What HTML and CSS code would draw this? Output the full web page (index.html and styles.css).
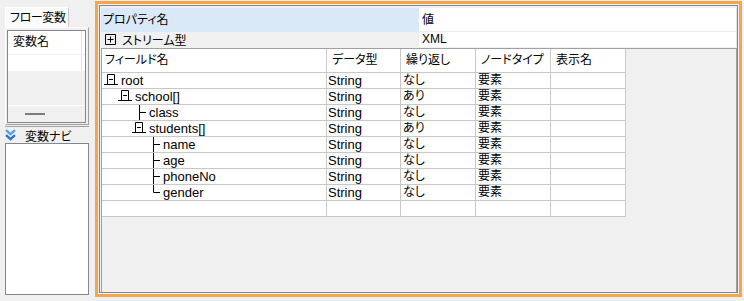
FILE: index.html
```html
<!DOCTYPE html>
<html lang="ja">
<head>
  <meta charset="UTF-8">
  <title>フロー変数</title>
  <link rel="stylesheet" href="styles.css">
</head>
<body>
  <div class="app">
    <aside class="side">
      <div class="tab">フロー変数</div>
      <div class="tab-page">
        <div class="var-list">
          <div class="var-head"><span class="var-col">変数名</span></div>
          <div class="var-row"><span class="var-col"></span></div>
          <div class="var-fill"></div>
          <div class="var-foot"><span class="grip"></span></div>
        </div>
      </div>
      <div class="nav-head">
        <svg class="chevrons" width="11" height="12" viewBox="0 0 11 12">
          <path d="M1 1.2l4.5 4 4.5-4" fill="none" stroke="#5a9ff0" stroke-width="2.4"/>
          <path d="M1 6.2l4.5 4 4.5-4" fill="none" stroke="#2a74d6" stroke-width="2.4"/>
        </svg>
        <span>変数ナビ</span>
      </div>
      <div class="nav-body"></div>
    </aside>

    <main class="main">
      <div class="frame">
        <div class="props">
          <div class="prop-head name">プロパティ名</div>
          <div class="prop-head value">値</div>
          <div class="prop-name">
            <svg width="11" height="11" viewBox="0 0 11 11"><path d="M0.5 0.5h10v10h-10zM2.5 5.5h6M5.5 2.5v6" fill="none" stroke="#000"/></svg>
            <span>ストリーム型</span>
          </div>
          <div class="prop-value">XML</div>
        </div>

        <div class="grid-area">
          <table class="fields">
            <colgroup>
              <col class="c-name"><col class="c-type"><col class="c-col"><col class="c-col"><col class="c-col">
            </colgroup>
            <tr class="head">
              <td class="first">フィールド名</td><td>データ型</td><td>繰り返し</td><td>ノードタイプ</td><td>表示名</td>
            </tr>
            <tr>
              <td><div class="node d0"><svg class="tw" width="17" height="15" viewBox="0 0 17 15"><path d="M3.5 11.5V1.5H10.5V11.5M0 11.5H14M5 6.5H9" fill="none" stroke="#000"/></svg>root</div></td>
              <td class="lt">String</td><td>なし</td><td>要素</td><td></td>
            </tr>
            <tr>
              <td><div class="node d1"><svg class="tw" width="17" height="15" viewBox="0 0 17 15"><path d="M3.5 11.5V1.5H10.5V11.5M0 11.5H14M5 6.5H9" fill="none" stroke="#000"/></svg>school[]</div></td>
              <td class="lt">String</td><td>あり</td><td>要素</td><td></td>
            </tr>
            <tr>
              <td><div class="node d2"><svg class="tw" width="17" height="15" viewBox="0 0 17 15"><path d="M7.5 0V16M7.5 7.5H14" fill="none" stroke="#000"/></svg>class</div></td>
              <td class="lt">String</td><td>なし</td><td>要素</td><td></td>
            </tr>
            <tr>
              <td><div class="node d2"><svg class="tw" width="17" height="15" viewBox="0 0 17 15"><path d="M3.5 11.5V1.5H10.5V11.5M0 11.5H14M5 6.5H9" fill="none" stroke="#000"/></svg>students[]</div></td>
              <td class="lt">String</td><td>あり</td><td>要素</td><td></td>
            </tr>
            <tr>
              <td><div class="node d3"><svg class="tw" width="17" height="15" viewBox="0 0 17 15"><path d="M7.5 0V16M7.5 7.5H14" fill="none" stroke="#000"/></svg>name</div></td>
              <td class="lt">String</td><td>なし</td><td>要素</td><td></td>
            </tr>
            <tr>
              <td><div class="node d3"><svg class="tw" width="17" height="15" viewBox="0 0 17 15"><path d="M7.5 0V16M7.5 7.5H14" fill="none" stroke="#000"/></svg>age</div></td>
              <td class="lt">String</td><td>なし</td><td>要素</td><td></td>
            </tr>
            <tr>
              <td><div class="node d3"><svg class="tw" width="17" height="15" viewBox="0 0 17 15"><path d="M7.5 0V16M7.5 7.5H14" fill="none" stroke="#000"/></svg>phoneNo</div></td>
              <td class="lt">String</td><td>なし</td><td>要素</td><td></td>
            </tr>
            <tr>
              <td><div class="node d3"><svg class="tw" width="17" height="15" viewBox="0 0 17 15"><path d="M7.5 0V7.5H14" fill="none" stroke="#000"/></svg>gender</div></td>
              <td class="lt">String</td><td>なし</td><td>要素</td><td></td>
            </tr>
            <tr>
              <td></td><td></td><td></td><td></td><td></td>
            </tr>
          </table>
        </div>
      </div>
    </main>
  </div>
</body>
</html>
```

FILE: styles.css
```css
* {
  box-sizing: border-box;
}

html, body {
  margin: 0;
}

body {
  width: 744px;
  height: 301px;
  overflow: hidden;
  background: #f0f0f0;
  font-family: "Liberation Sans", "Noto Sans CJK JP", sans-serif;
  font-size: 12px;
  font-feature-settings: "palt";
  color: #000;
}

.app {
  display: flex;
  height: 301px;
}

/* left column */
.side {
  width: 94px;
  flex: none;
  display: flex;
  flex-direction: column;
  padding: 7px 0 6px 5px;
}

.tab {
  width: 64px;
  height: 20px;
  background: #fbfbfb;
  border-top: 1px solid #fff;
  border-left: 1px solid #fff;
  border-right: 1px solid #c9c9c9;
  padding: 1px 0 0 4px;
  line-height: 18px;
  white-space: nowrap;
  letter-spacing: -0.4px;
  overflow: hidden;
}

.tab-page {
  width: 84px;
  height: 98px;
  border: 1px solid;
  border-color: #fff #a0a0a0 #a0a0a0 #fff;
  padding: 2px 2px 1px 1px;
}

.var-list {
  height: 100%;
  border: 1px solid #828790;
  display: flex;
  flex-direction: column;
  background: #f0f0f0;
}

.var-head {
  display: flex;
  height: 24px;
  background: #fff;
  border-bottom: 1px solid #f0f0f0;
}

.var-row {
  display: flex;
  height: 16px;
  background: #fff;
}

.var-col {
  width: 74px;
  border-right: 1px solid #e3e3e3;
  padding-left: 5px;
  line-height: 23px;
}

.var-fill {
  flex: 1;
}

.var-foot {
  height: 17px;
  border-top: 1px solid #fff;
  padding: 7px 0 0 17px;
}

.grip {
  display: block;
  width: 20px;
  height: 2px;
  background: #7c7c7c;
}

.nav-head {
  width: 84px;
  height: 17px;
  margin-top: 1px;
  border-top: 1px solid #a0a0a0;
  display: flex;
  align-items: center;
  gap: 9px;
}

.nav-body {
  flex: 1;
  width: 84px;
  background: #fff;
  border: 1px solid #828790;
}

/* right column */
.main {
  flex: 1;
  margin: 1px 2px 4px 1px;
  border: 3px solid #f7a54b;
  padding: 1px;
  display: flex;
  background: #f0f0f0;
}

.frame {
  flex: 1;
  min-width: 0;
  border: 1px solid #828790;
  padding: 2px 0 0 1px;
  display: flex;
  flex-direction: column;
}

.props {
  display: grid;
  grid-template-columns: 1fr 1fr;
}

.prop-head {
  height: 24px;
  line-height: 24px;
}

.prop-head.name {
  background: #d9e9f8;
  padding-left: 2px;
}

.prop-head.value {
  background: #fff;
  padding-left: 3px;
  border-right: 1px solid #e3e3e3;
  border-bottom: 1px solid #ececec;
}

.prop-name {
  height: 15px;
  display: flex;
  align-items: center;
  gap: 6px;
  padding-left: 4px;
}

.prop-value {
  height: 15px;
  line-height: 15px;
  background: #fff;
  padding-left: 3px;
  border-right: 1px solid #e3e3e3;
}

.grid-area {
  flex: 1;
  margin-top: 1px;
  border: 1px solid #a0a0a0;
  border-bottom: none;
  background: #f0f0f0;
}

.fields {
  border-collapse: separate;
  border-spacing: 0;
  table-layout: fixed;
  width: 524px;
}

.c-name { width: 225px; }
.c-type { width: 74px; }
.c-col { width: 75px; }

.fields tr {
  height: 16px;
}

.fields tr.head {
  height: 24px;
}

.fields td {
  background: #fff;
  border-right: 1px solid #c8c8c8;
  border-bottom: 1px solid #c8c8c8;
  padding: 0 0 0 2px;
  white-space: nowrap;
  overflow: hidden;
  line-height: 15px;
}

.fields tr.head td {
  padding-left: 5px;
}

.fields tr.head td.first {
  padding-left: 3px;
}

.fields td.lt {
  font-size: 13px;
  padding-left: 1px;
}

.node {
  display: flex;
  align-items: center;
  height: 15px;
  font-size: 13px;
  margin-left: -2px;
}

.tw {
  flex: none;
  display: block;
  overflow: visible;
}

.d0 { padding-left: 2px; }
.d1 { padding-left: 16px; }
.d2 { padding-left: 30px; }
.d3 { padding-left: 44px; }
```
